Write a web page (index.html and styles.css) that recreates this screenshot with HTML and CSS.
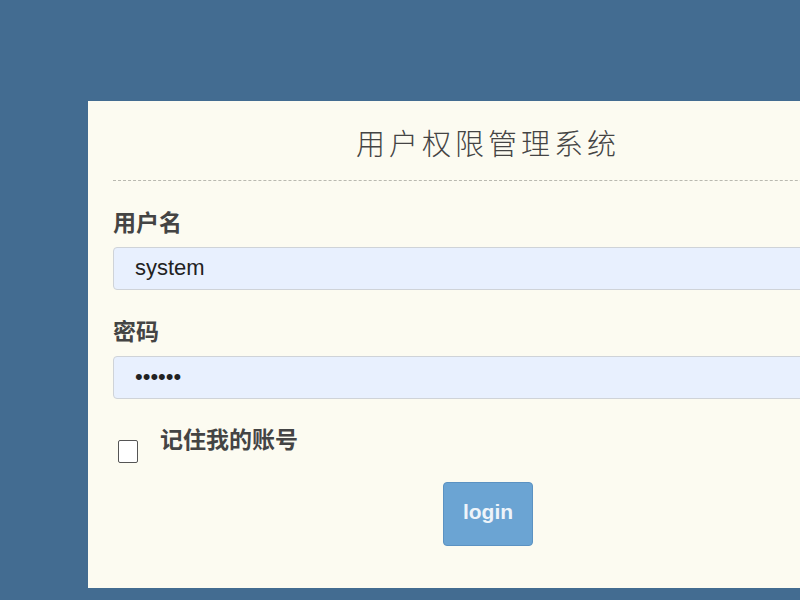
FILE: index.html
```html
<!DOCTYPE html>
<html lang="zh-CN">
<head>
<meta charset="utf-8">
<title>用户权限管理系统</title>
<link rel="stylesheet" href="styles.css">
</head>
<body>
<div class="wrap">
  <div class="card">
    <h1 class="title">用户权限管理系统</h1>
    <form class="form">
      <label class="label" for="u">用户名</label>
      <input class="field" id="u" type="text" value="system">
      <label class="label" for="p">密码</label>
      <input class="field" id="p" type="password" value="123456">
      <div class="remember">
        <input class="check" type="checkbox" id="r">
        <label class="label" for="r">记住我的账号</label>
      </div>
      <div class="actions">
        <button class="btn" type="button">login</button>
      </div>
    </form>
  </div>
</div>
</body>
</html>
```

FILE: styles.css
```css
html, body {
  margin: 0;
  padding: 0;
}
body {
  background: #436c91;
  height: 600px;
  overflow: hidden;
  font-family: "Liberation Sans", "Noto Sans CJK SC", sans-serif;
}
.wrap {
  padding: 101px 0 0 88px;
}
.card {
  width: 750px;
  height: 487px;
  background: #fcfbf1;
  padding: 0 25px;
}
.title {
  margin: 0;
  padding: 24px 0 20px;
  font-family: "Noto Sans CJK SC", sans-serif;
  font-weight: 300;
  font-size: 29px;
  line-height: 35px;
  letter-spacing: 4px;
  color: #444;
  text-align: center;
  border-bottom: 1px dashed #b9b9b0;
}
.form {
  display: flex;
  flex-direction: column;
}
.label {
  display: block;
  margin-top: 25px;
  font-family: "Noto Sans CJK SC", sans-serif;
  font-weight: 700;
  font-size: 23px;
  line-height: 30px;
  color: #444;
}
.field {
  box-sizing: border-box;
  margin-top: 11px;
  width: 100%;
  height: 43px;
  padding: 0 21px 2px;
  border: 1px solid #cfd3d8;
  border-radius: 4px;
  background: #e8f0fe;
  font-family: "Liberation Sans", sans-serif;
  font-size: 22px;
  color: #222;
  outline: none;
}
.remember {
  display: flex;
  align-items: flex-start;
  gap: 22px;
  margin-top: 24px;
}
.remember .label {
  margin-top: 0;
}
.check {
  appearance: none;
  -webkit-appearance: none;
  box-sizing: border-box;
  margin: 17px 0 0 5px;
  width: 20px;
  height: 23px;
  border: 1.5px solid #555;
  border-radius: 2px;
  background: #fff;
}
.actions {
  display: flex;
  justify-content: center;
  margin-top: 19px;
}
.btn {
  width: 90px;
  height: 64px;
  border: 1px solid #5b92c2;
  border-radius: 4px;
  background: #6ba4d3;
  color: #eef4fa;
  font-family: "Liberation Sans", "Noto Sans", sans-serif;
  font-weight: 700;
  font-size: 21px;
  padding: 0 0 4px;
}
```
